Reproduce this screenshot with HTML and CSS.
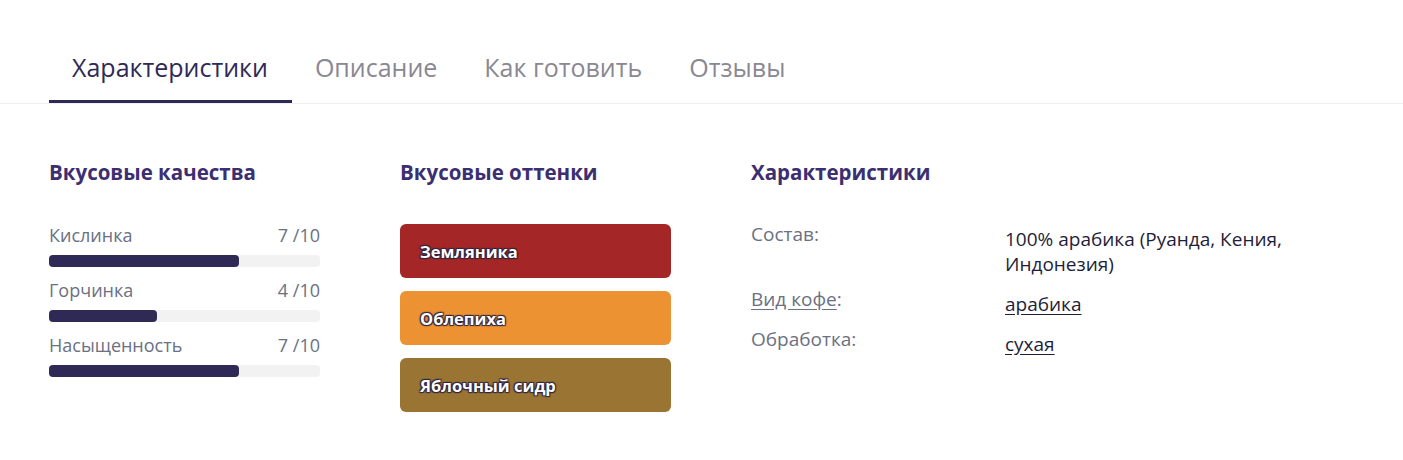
FILE: index.html
```html
<!DOCTYPE html>
<html lang="ru">
<head>
<meta charset="utf-8">
<title>Характеристики</title>
<link rel="stylesheet" href="styles.css">
</head>
<body>
<div class="tabs">
  <div class="tab active">Характеристики</div>
  <div class="tab">Описание</div>
  <div class="tab">Как готовить</div>
  <div class="tab">Отзывы</div>
</div>
<div class="content">
  <section class="col">
    <h3 class="heading">Вкусовые качества</h3>
    <div class="scales">
      <div class="scale">
        <div class="scale-row"><span>Кислинка</span><span>7 /10</span></div>
        <div class="track"><div class="fill" style="width:70%"></div></div>
      </div>
      <div class="scale">
        <div class="scale-row"><span>Горчинка</span><span>4 /10</span></div>
        <div class="track"><div class="fill" style="width:40%"></div></div>
      </div>
      <div class="scale">
        <div class="scale-row"><span>Насыщенность</span><span>7 /10</span></div>
        <div class="track"><div class="fill" style="width:70%"></div></div>
      </div>
    </div>
  </section>
  <section class="col">
    <h3 class="heading">Вкусовые оттенки</h3>
    <div class="notes">
      <div class="note note-red">Земляника</div>
      <div class="note note-orange">Облепиха</div>
      <div class="note note-brown">Яблочный сидр</div>
    </div>
  </section>
  <section class="col col-wide">
    <h3 class="heading">Характеристики</h3>
    <div class="props">
      <div class="prop-label">Состав:</div>
      <div class="prop-value">100% арабика (Руанда, Кения, Индонезия)</div>
      <div class="prop-label"><a class="label-link" href="#">Вид кофе</a>:</div>
      <div class="prop-value"><a class="value-link" href="#">арабика</a></div>
      <div class="prop-label">Обработка:</div>
      <div class="prop-value"><a class="value-link" href="#">сухая</a></div>
    </div>
  </section>
</div>
</body>
</html>
```
FILE: styles.css
```css
* { box-sizing: border-box; }
body {
  margin: 0;
  background: #fff;
  font-family: "Open Sans", Lato, "Liberation Sans", sans-serif;
  color: #2e2a55;
}
.tabs {
  display: flex;
  padding: 52px 0 0 49px;
  border-bottom: 1px solid #efefef;
}
.tab {
  padding: 0 24px 18px 23px;
  font-size: 25px;
  line-height: 30px;
  color: #8a8793;
  border-bottom: 3px solid transparent;
}
.tab.active {
  color: #2e2a55;
  border-bottom-color: #2e2a55;
}
.content {
  display: flex;
  gap: 80px;
  padding: 56px 0 0 49px;
}
.col { width: 271px; }
.col-wide { width: 560px; }
.heading {
  margin: 0;
  font-size: 20.5px;
  line-height: 24px;
  font-weight: 700;
  color: #3b2f72;
}
.scales {
  margin-top: 41px;
  display: flex;
  flex-direction: column;
  gap: 13px;
}
.scale-row {
  display: flex;
  justify-content: space-between;
  font-size: 18px;
  line-height: 20px;
  color: #6b7082;
}
.track {
  margin-top: 10px;
  height: 12px;
  border-radius: 4px;
  background: #f2f2f2;
}
.fill {
  height: 100%;
  border-radius: 4px;
  background: #2e2a55;
}
.notes {
  margin-top: 40px;
  display: flex;
  flex-direction: column;
  gap: 13px;
}
.note {
  height: 54px;
  border-radius: 6px;
  padding: 0 20px;
  display: flex;
  align-items: center;
  font-size: 16.5px;
  font-weight: 700;
  color: #fff;
  text-shadow: 1px 1px 1px #2e2440, -1px -1px 1px #2e2440, 1px -1px 1px #2e2440, -1px 1px 1px #2e2440;
}
.note-red { background: #a42626; }
.note-orange { background: #ed9232; }
.note-brown { background: #9a7433; }
.props {
  margin-top: 43px;
  display: grid;
  grid-template-columns: 254px 300px;
  row-gap: 15px;
  font-size: 19px;
}
.prop-label {
  margin-top: -3px;
  line-height: 20px;
  color: #6b7082;
}
.prop-value {
  line-height: 25px;
  color: #1f1d3a;
}
.label-link { color: #6b7082; text-decoration: underline; text-underline-offset: 3px; }
.value-link { color: #1f1d3a; text-decoration: underline; text-underline-offset: 3px; }
```
